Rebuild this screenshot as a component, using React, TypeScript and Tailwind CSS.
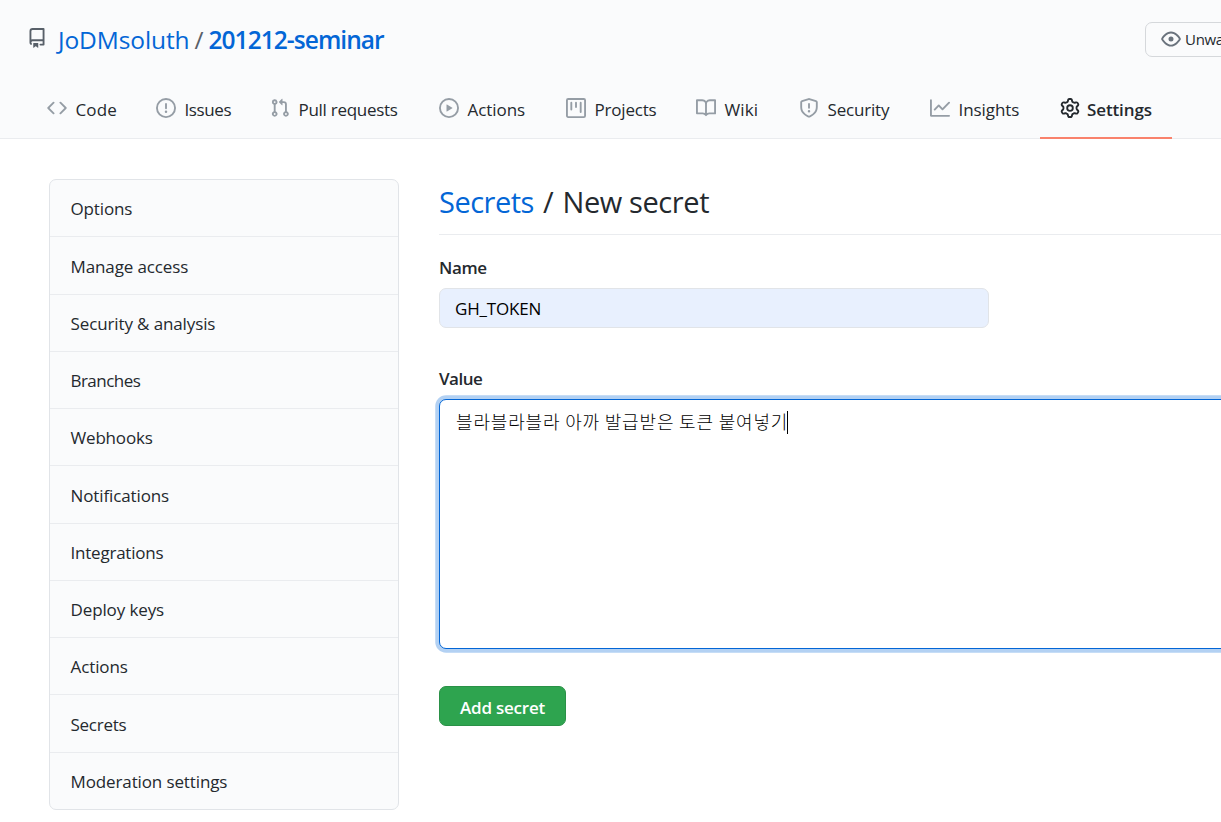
type IconProps = { d: string; className?: string };

function Octicon({ d, className = "" }: IconProps) {
  return (
    <svg viewBox="0 0 16 16" width="20" height="20" fill="currentColor" fillRule="evenodd" className={`shrink-0 ${className}`} aria-hidden="true">
      <path d={d} />
    </svg>
  );
}

const paths = {
  repo: "M2 2.5A2.5 2.5 0 014.5 0h8.75a.75.75 0 01.75.75v12.5a.75.75 0 01-.75.75h-2.5a.75.75 0 110-1.5h1.75v-2h-8a1 1 0 00-.714 1.7.75.75 0 01-1.072 1.05A2.495 2.495 0 012 11.5v-9zm10.5-1V9h-8c-.356 0-.694.074-1 .208V2.5a1 1 0 011-1h8zM5 12.25v3.25a.25.25 0 00.4.2l1.45-1.087a.25.25 0 01.3 0L8.6 15.7a.25.25 0 00.4-.2v-3.25a.25.25 0 00-.25-.25h-3.5a.25.25 0 00-.25.25z",
  code: "M4.72 3.22a.75.75 0 011.06 1.06L2.06 8l3.72 3.72a.75.75 0 11-1.06 1.06L.47 8.53a.75.75 0 010-1.06l4.25-4.25zm6.56 0a.75.75 0 10-1.06 1.06L13.94 8l-3.72 3.72a.75.75 0 101.06 1.06l4.25-4.25a.75.75 0 000-1.06l-4.25-4.25z",
  issue: "M8 1.5a6.5 6.5 0 100 13 6.5 6.5 0 000-13zM0 8a8 8 0 1116 0A8 8 0 010 8zm9 3a1 1 0 11-2 0 1 1 0 012 0zm-.25-6.25a.75.75 0 00-1.5 0v3.5a.75.75 0 001.5 0v-3.5z",
  pull: "M7.177 3.073L9.573.677A.25.25 0 0110 .854v4.792a.25.25 0 01-.427.177L7.177 3.427a.25.25 0 010-.354zM3.75 2.5a.75.75 0 100 1.5.75.75 0 000-1.5zm-2.25.75a2.25 2.25 0 113 2.122v5.256a2.251 2.251 0 11-1.5 0V5.372A2.25 2.25 0 011.5 3.25zM11 2.5h-1V4h1a1 1 0 011 1v5.628a2.251 2.251 0 101.5 0V5A2.5 2.5 0 0011 2.5zm1 10.25a.75.75 0 111.5 0 .75.75 0 01-1.5 0zM3.75 12a.75.75 0 100 1.5.75.75 0 000-1.5z",
  play: "M1.5 8a6.5 6.5 0 1113 0 6.5 6.5 0 01-13 0zM8 0a8 8 0 100 16A8 8 0 008 0zM6.379 5.227A.25.25 0 006 5.442v5.117a.25.25 0 00.379.214l4.264-2.559a.25.25 0 000-.428L6.379 5.227z",
  project: "M1.75 0A1.75 1.75 0 000 1.75v12.5C0 15.216.784 16 1.75 16h12.5A1.75 1.75 0 0016 14.25V1.75A1.75 1.75 0 0014.25 0H1.75zM1.5 1.75a.25.25 0 01.25-.25h12.5a.25.25 0 01.25.25v12.5a.25.25 0 01-.25.25H1.75a.25.25 0 01-.25-.25V1.75zM11.75 3a.75.75 0 00-.75.75v7.5a.75.75 0 001.5 0v-7.5a.75.75 0 00-.75-.75zm-8.25.75a.75.75 0 011.5 0v5.5a.75.75 0 01-1.5 0v-5.5zM8 3a.75.75 0 00-.75.75v3.5a.75.75 0 001.5 0v-3.5A.75.75 0 008 3z",
  book: "M0 1.75A.75.75 0 01.75 1h4.253c1.227 0 2.317.59 3 1.501A3.744 3.744 0 0111.006 1h4.245a.75.75 0 01.75.75v10.5a.75.75 0 01-.75.75h-4.507a2.25 2.25 0 00-1.591.659l-.622.621a.75.75 0 01-1.06 0l-.622-.621A2.25 2.25 0 005.258 13H.75a.75.75 0 01-.75-.75V1.75zm8.755 3a2.25 2.25 0 012.25-2.25H14.5v9h-3.757c-.71 0-1.4.201-1.992.572l.004-7.322zm-1.504 7.324l.004-5.073-.002-2.253A2.25 2.25 0 005.003 2.5H1.5v9h3.757a3.75 3.75 0 011.994.574z",
  shield: "M7.467.133a1.75 1.75 0 011.066 0l5.25 1.68A1.75 1.75 0 0115 3.48V7c0 1.566-.32 3.182-1.303 4.682-.983 1.498-2.585 2.813-5.032 3.855a1.7 1.7 0 01-1.33 0c-2.447-1.042-4.049-2.357-5.032-3.855C1.32 10.182 1 8.566 1 7V3.48a1.75 1.75 0 011.217-1.667l5.25-1.68zm.61 1.429a.25.25 0 00-.153 0l-5.25 1.68a.25.25 0 00-.174.238V7c0 1.358.275 2.666 1.057 3.86.784 1.194 2.121 2.34 4.366 3.297a.2.2 0 00.154 0c2.245-.956 3.582-2.104 4.366-3.298C13.225 9.666 13.5 8.36 13.5 7V3.48a.25.25 0 00-.174-.237l-5.25-1.68zM9 10.5a1 1 0 11-2 0 1 1 0 012 0zm-.25-5.75a.75.75 0 10-1.5 0v3a.75.75 0 001.5 0v-3z",
  graph: "M1.5 1.75a.75.75 0 00-1.5 0v12.5c0 .414.336.75.75.75h14.5a.75.75 0 000-1.5H1.5V1.75zm14.28 2.53a.75.75 0 00-1.06-1.06L10 7.94 7.53 5.47a.75.75 0 00-1.06 0L3.22 8.72a.75.75 0 001.06 1.06L7 7.06l2.47 2.47a.75.75 0 001.06 0l5.25-5.25z",
  gear: "M7.429 1.525a6.593 6.593 0 011.142 0c.036.003.108.036.137.146l.289 1.105c.147.56.55.967.997 1.189.174.086.341.183.501.29.417.278.97.423 1.53.27l1.102-.303c.11-.03.175.016.195.046.219.31.41.641.573.989.014.031.022.11-.059.19l-.815.806c-.411.406-.562.957-.53 1.456a4.588 4.588 0 010 .582c-.032.499.119 1.05.53 1.456l.815.806c.08.08.073.159.059.19a6.494 6.494 0 01-.573.99c-.02.029-.086.074-.195.045l-1.103-.303c-.559-.153-1.112-.008-1.529.27-.16.107-.327.204-.5.29-.449.222-.851.628-.998 1.189l-.289 1.105c-.029.11-.101.143-.137.146a6.613 6.613 0 01-1.142 0c-.036-.003-.108-.037-.137-.146l-.289-1.105c-.147-.56-.55-.967-.997-1.189a4.502 4.502 0 01-.501-.29c-.417-.278-.97-.423-1.53-.27l-1.102.303c-.11.03-.175-.016-.195-.046a6.492 6.492 0 01-.573-.989c-.014-.031-.022-.11.059-.19l.815-.806c.411-.406.562-.957.53-1.456a4.587 4.587 0 010-.582c.032-.499-.119-1.05-.53-1.456l-.815-.806c-.08-.08-.073-.159-.059-.19a6.44 6.44 0 01.573-.99c.02-.029.086-.075.195-.045l1.103.303c.559.153 1.112.008 1.529-.27.16-.107.327-.204.5-.29.449-.222.851-.628.998-1.189l.289-1.105c.029-.11.101-.143.137-.146zM8 0c-.236 0-.47.01-.701.03-.743.065-1.29.615-1.458 1.261l-.29 1.106c-.017.066-.078.158-.211.224a5.994 5.994 0 00-.668.386c-.123.082-.233.09-.3.071L3.27 2.776c-.644-.177-1.392.02-1.82.63a7.977 7.977 0 00-.704 1.217c-.315.675-.111 1.422.363 1.891l.815.806c.05.048.098.147.088.294a6.084 6.084 0 000 .772c.01.147-.038.246-.088.294l-.815.806c-.474.469-.678 1.216-.363 1.891.2.428.436.835.704 1.218.428.609 1.176.806 1.82.63l1.103-.303c.066-.019.176-.011.299.071.213.143.436.272.668.386.133.066.194.158.212.224l.289 1.106c.169.646.715 1.196 1.458 1.26a8.094 8.094 0 001.402 0c.743-.064 1.29-.614 1.458-1.26l.29-1.106c.017-.066.078-.158.211-.224a5.98 5.98 0 00.668-.386c.123-.082.233-.09.3-.071l1.102.302c.644.177 1.392-.02 1.82-.63.268-.382.505-.789.704-1.217.315-.675.111-1.422-.364-1.891l-.814-.806c-.05-.048-.098-.147-.088-.294a6.1 6.1 0 000-.772c-.01-.147.039-.246.088-.294l.814-.806c.475-.469.679-1.216.364-1.891a7.992 7.992 0 00-.704-1.218c-.428-.609-1.176-.806-1.82-.63l-1.103.303c-.066.019-.176.011-.299-.071a5.991 5.991 0 00-.668-.386c-.133-.066-.194-.158-.212-.224L10.16 1.29C9.99.645 9.444.095 8.701.031A8.094 8.094 0 008 0zm1.5 8a1.5 1.5 0 11-3 0 1.5 1.5 0 013 0zM11 8a3 3 0 11-6 0 3 3 0 016 0z",
  eye: "M1.679 7.932c.412-.621 1.242-1.75 2.366-2.717C5.175 4.242 6.527 3.5 8 3.5c1.473 0 2.824.742 3.955 1.715 1.124.967 1.954 2.096 2.366 2.717a.119.119 0 010 .136c-.412.621-1.242 1.75-2.366 2.717C10.825 11.758 9.473 12.5 8 12.5c-1.473 0-2.824-.742-3.955-1.715C2.92 9.818 2.09 8.69 1.679 8.068a.119.119 0 010-.136zM8 2c-1.981 0-3.67.992-4.933 2.078C1.797 5.169.88 6.423.43 7.1a1.619 1.619 0 000 1.798c.45.678 1.367 1.932 2.637 3.024C4.329 13.008 6.019 14 8 14c1.981 0 3.67-.992 4.933-2.078 1.27-1.091 2.187-2.345 2.637-3.023a1.619 1.619 0 000-1.798c-.45-.678-1.367-1.932-2.637-3.023C11.671 2.992 9.981 2 8 2zm0 8a2 2 0 100-4 2 2 0 000 4z",
};

const tabs = [
  { label: "Code", icon: paths.code, box: "w-[109px]", track: "tracking-[0.15px]" },
  { label: "Issues", icon: paths.issue, box: "w-[114px]", track: "tracking-[-0.4px]" },
  { label: "Pull requests", icon: paths.pull, box: "w-[169px]", track: "tracking-[-0.28px]" },
  { label: "Actions", icon: paths.play, box: "w-[127px]", track: "tracking-[-0.05px]" },
  { label: "Projects", icon: paths.project, box: "w-[130px]", track: "tracking-[-0.2px]" },
  { label: "Wiki", icon: paths.book, box: "w-[103px]", track: "tracking-[0.1px]" },
  { label: "Security", icon: paths.shield, box: "w-[131px]", track: "tracking-[-0.18px]" },
  { label: "Insights", icon: paths.graph, box: "w-[130px]", track: "tracking-[-0.08px]" },
  { label: "Settings", icon: paths.gear, box: "w-[132px]", track: "tracking-[-0.12px]", active: true },
];

const menu = [
  { label: "Options", track: "tracking-[-0.15px]" },
  { label: "Manage access", track: "tracking-[-0.12px]" },
  { label: "Security & analysis", track: "tracking-[-0.12px]" },
  { label: "Branches", track: "tracking-[-0.54px]" },
  { label: "Webhooks", track: "tracking-[-0.18px]" },
  { label: "Notifications", track: "tracking-[-0.12px]" },
  { label: "Integrations", track: "tracking-[-0.22px]" },
  { label: "Deploy keys", track: "tracking-[-0.12px]" },
  { label: "Actions", track: "tracking-[-0.1px]" },
  { label: "Secrets", track: "tracking-[-0.25px]" },
  { label: "Moderation settings", track: "tracking-[-0.12px]" },
];

function Header() {
  return (
    <header className="flex h-[139px] flex-col border-b border-[#eaecef] bg-[#fafbfc]">
      <div className="flex h-20 items-start pl-[27px]">
        <Octicon d={paths.repo} className="mt-7 text-[#586069]" />
        <h1 className="mt-[22px] ml-[11px] flex text-[24.5px] leading-9 text-[#0366d6]">
          <a className="tracking-[-0.1px]">JoDMsoluth</a>
          <span className="mx-[5px] text-[#586069]">/</span>
          <a className="font-semibold tracking-[-0.95px]">201212-seminar</a>
        </h1>
        <button className="mt-[22px] -mr-20 ml-auto flex h-[35px] w-[156px] shrink-0 items-center rounded-[7px] border border-[#d5d8db] pl-[15px] text-[15px] font-medium tracking-[-0.3px] whitespace-nowrap">
          <Octicon d={paths.eye} className="-mt-0.5 mr-1 text-[#6a737d]" />
          Unwatch
        </button>
      </div>
      <nav className="-mb-px flex h-[59px] pl-[27px]">
        {tabs.map((t) => (
          <a
            key={t.label}
            className={`flex shrink-0 items-center border-b-2 pb-px pl-5 ${t.box} ${t.active ? "border-[#f9826c] font-semibold" : "border-transparent"}`}
          >
            <Octicon d={t.icon} className={t.active ? "mr-[7px] text-[#24292e]" : "mr-[8.5px] text-[#959da5]"} />
            <span className={`mt-1 whitespace-nowrap ${t.track}`}>{t.label}</span>
          </a>
        ))}
      </nav>
    </header>
  );
}

export default function App() {
  return (
    <div className="h-[822px] w-full overflow-hidden bg-white font-['Open_Sans','Noto_Sans_CJK_KR',sans-serif] text-[17px] font-[370] text-[#24292e]">
      <Header />
      <main className="flex pt-10 pl-[49px]">
        <nav className="h-[631px] w-[350px] shrink-0 overflow-hidden rounded-[7px] border border-[#e1e4e8] bg-[#fafbfc]">
          {menu.map((m) => (
            <a key={m.label} className="flex h-[57.25px] items-center border-b border-[#eaecef] pt-0.5 pl-[20.5px] last:border-b-0">
              <span className={m.track}>{m.label}</span>
            </a>
          ))}
        </nav>
        <section className="ml-10 min-w-0 flex-1">
          <h2 className="flex h-14 items-start border-b border-[#eaecef] pt-[3px] text-[29px] leading-10">
            <a className="tracking-[-0.5px] text-[#0366d6]">Secrets</a>
            <span className="mx-[9px]">/</span>
            <span className="tracking-[-0.4px]">New secret</span>
          </h2>
          <label className="mt-5 block leading-[26px] font-semibold tracking-[-0.35px]">Name</label>
          <div className="mt-[7px] flex h-10 w-[550px] items-center rounded-[7px] border border-[#e1e4e8] bg-[#e8f0fe] pt-0.5 pl-[15px] tracking-[-0.2px] text-black">
            GH_TOKEN
          </div>
          <label className="mt-[38px] block leading-[26px] font-semibold tracking-[-0.5px]">Value</label>
          <div className="mt-[7px] -mr-10 flex h-[250px] items-start rounded-[7px] border border-[#0366d6] bg-white pt-[11px] pl-4 shadow-[0_0_0_3.75px_rgba(3,102,214,0.3)]">
            <span className="-mt-px font-['Noto_Sans_CJK_KR',sans-serif] text-[18px] leading-[23px] font-light tracking-[0.83px] whitespace-nowrap text-black">
              블라블라블라 아까 발급받은 토큰 붙여넣기
            </span>
            <span className="-ml-px h-[23px] w-px bg-black" />
          </div>
          <button className="mt-[37px] flex h-10 w-[127px] items-center justify-center rounded-[7px] border border-[#2a9147] bg-[#2ea44f] pt-[3px] font-semibold tracking-[-0.22px] text-white">
            Add secret
          </button>
        </section>
      </main>
    </div>
  );
}
